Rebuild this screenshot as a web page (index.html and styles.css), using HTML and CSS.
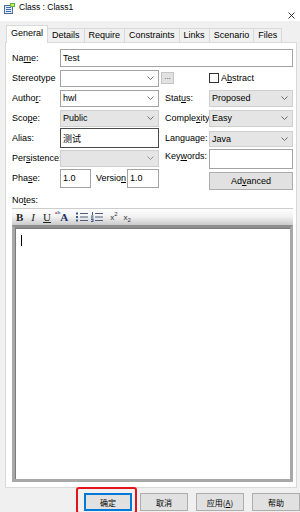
FILE: index.html
```html
<!DOCTYPE html>
<html>
<head>
<meta charset="utf-8">
<link rel="stylesheet" href="styles.css">
</head>
<body>
<div class="titlebar">
  <svg class="app-icon" width="11" height="11" viewBox="0 0 11 11">
    <rect x="0.5" y="2.5" width="8" height="8" fill="#e4eaf2" stroke="#4d6c9c"/>
    <rect x="2" y="4" width="5" height="1" fill="#3a6fc0"/>
    <rect x="2" y="6" width="5" height="1" fill="#3a6fc0"/>
    <rect x="2" y="8" width="5" height="1" fill="#3a6fc0"/>
    <rect x="6" y="0" width="5" height="4" fill="#5cb84a"/>
    <rect x="7" y="1" width="3" height="2" fill="#d6e85a"/>
  </svg>
  <span class="title">Class : Class1</span>
  <svg class="close" width="7" height="7" viewBox="0 0 7 7">
    <path d="M0.5 0.5 L6.5 6.5 M6.5 0.5 L0.5 6.5" stroke="#222" stroke-width="0.9" fill="none"/>
  </svg>
</div>

<div class="tabs">
  <div class="tab active">General</div>
  <div class="tab">Details</div>
  <div class="tab">Require</div>
  <div class="tab">Constraints</div>
  <div class="tab">Links</div>
  <div class="tab">Scenario</div>
  <div class="tab">Files</div>
</div>

<div class="panel">
  <div class="form">
    <div class="lbl r1">Na<u>m</u>e:</div>
    <div class="field r1 c-name">Test</div>

    <div class="lbl r2">Stereotype</div>
    <div class="field combo r2 c2"><span class="val"></span><svg class="chev" width="7" height="4" viewBox="0 0 7 4"><polyline points="0.5,0.5 3.5,3.5 6.5,0.5" fill="none" stroke="#606060" stroke-width="0.9"/></svg></div>
    <div class="r2 c34 dots-cell"><div class="dots">...</div></div>
    <div class="r2 c5 abstract"><span class="chk"></span><span>A<u>b</u>stract</span></div>

    <div class="lbl r3">Autho<u>r</u>:</div>
    <div class="field combo r3 c2"><span class="val">hwl</span><svg class="chev" width="7" height="4" viewBox="0 0 7 4"><polyline points="0.5,0.5 3.5,3.5 6.5,0.5" fill="none" stroke="#606060" stroke-width="0.9"/></svg></div>
    <div class="lbl r3 c4">Stat<u>u</u>s:</div>
    <div class="field combo ro r3 c5"><span class="val">Proposed</span><svg class="chev" width="7" height="4" viewBox="0 0 7 4"><polyline points="0.5,0.5 3.5,3.5 6.5,0.5" fill="none" stroke="#606060" stroke-width="0.9"/></svg></div>

    <div class="lbl r4">Sco<u>p</u>e:</div>
    <div class="field combo ro r4 c2"><span class="val">Public</span><svg class="chev" width="7" height="4" viewBox="0 0 7 4"><polyline points="0.5,0.5 3.5,3.5 6.5,0.5" fill="none" stroke="#606060" stroke-width="0.9"/></svg></div>
    <div class="lbl r4 c4">Comple<u>x</u>ity</div>
    <div class="field combo ro r4 c5"><span class="val">Easy</span><svg class="chev" width="7" height="4" viewBox="0 0 7 4"><polyline points="0.5,0.5 3.5,3.5 6.5,0.5" fill="none" stroke="#606060" stroke-width="0.9"/></svg></div>

    <div class="lbl r5">Alias:</div>
    <div class="field alias r5 c2">测试</div>
    <div class="lbl r5 c4">Language:</div>
    <div class="field combo ro r5 c5 lang"><span class="val">Java</span><svg class="chev" width="7" height="4" viewBox="0 0 7 4"><polyline points="0.5,0.5 3.5,3.5 6.5,0.5" fill="none" stroke="#606060" stroke-width="0.9"/></svg></div>

    <div class="lbl r6">Per<u>s</u>istence:</div>
    <div class="field combo ro dis r6 c2"><span class="val"></span><svg class="chev" width="7" height="4" viewBox="0 0 7 4"><polyline points="0.5,0.5 3.5,3.5 6.5,0.5" fill="none" stroke="#8a8a8a" stroke-width="0.9"/></svg></div>
    <div class="lbl r6 c4 kw-lbl">Key<u>w</u>ords:</div>
    <div class="field kw r6 c5"></div>

    <div class="lbl r7">Pha<u>s</u>e:</div>
    <div class="r7 c2 phase-cell">
      <div class="field phase">1.0</div>
      <div class="ver-lbl"><span>Versio<u>n</u></span></div>
      <div class="field version">1.0</div>
    </div>
    <div class="r7 c5 adv">Ad<u>v</u>anced</div>
  </div>

  <div class="notes-lbl">No<u>t</u>es:</div>
  <div class="toolbar">
    <span class="tb tb-b">B</span>
    <span class="tb tb-i">I</span>
    <span class="tb tb-u">U</span>
    <span class="tb tb-a"><span class="fa-s"><span class="fa-s1">a</span><span class="fa-s2">b</span></span><span class="fa-big">A</span></span>
    <svg class="tb tb-ul" width="12" height="10" viewBox="0 0 12 10">
      <rect x="0" y="0.5" width="2" height="2" fill="#3a5a8c"/>
      <rect x="0" y="4" width="2" height="2" fill="#3a5a8c"/>
      <rect x="0" y="7.5" width="2" height="2" fill="#3a5a8c"/>
      <rect x="4" y="1" width="8" height="1" fill="#50607a"/>
      <rect x="4" y="4.5" width="8" height="1" fill="#50607a"/>
      <rect x="4" y="8" width="8" height="1" fill="#50607a"/>
    </svg>
    <svg class="tb tb-ol" width="12" height="10" viewBox="0 0 12 10">
      <rect x="1" y="0" width="1" height="3" fill="#3a5a8c"/>
      <rect x="0" y="3.5" width="2.5" height="1" fill="#3a5a8c"/>
      <rect x="0.5" y="4.5" width="1" height="1" fill="#3a5a8c"/>
      <rect x="0" y="5.5" width="2.5" height="1" fill="#3a5a8c"/>
      <rect x="0" y="7" width="2.5" height="1" fill="#3a5a8c"/>
      <rect x="1.5" y="8" width="1" height="1" fill="#3a5a8c"/>
      <rect x="0" y="9" width="2.5" height="1" fill="#3a5a8c"/>
      <rect x="4" y="1" width="8" height="1" fill="#50607a"/>
      <rect x="4" y="4.5" width="8" height="1" fill="#50607a"/>
      <rect x="4" y="8" width="8" height="1" fill="#50607a"/>
    </svg>
    <span class="tb tb-sup">x<span class="sup">2</span></span>
    <span class="tb tb-sub">x<span class="sub">2</span></span>
  </div>
  <div class="editor"><span class="caret"></span></div>
</div>

<div class="buttons">
  <div class="btn default">确定</div>
  <div class="btn">取消</div>
  <div class="btn">应用(<u>A</u>)</div>
  <div class="btn">帮助</div>
</div>
<div class="mark"></div>
</body>
</html>
```

FILE: styles.css
```css
body {
  margin: 0;
  width: 300px;
  height: 512px;
  overflow: hidden;
  position: relative;
  background: #f0f0f0;
  font-family: "Liberation Sans", Arial, "Noto Sans CJK SC", sans-serif;
  font-size: 9px;
  color: #000;
}

.titlebar {
  height: 21px;
  background: #fff;
  display: flex;
  align-items: flex-start;
}
.app-icon { margin: 3px 0 0 4px; }
.title {
  margin: 2px 0 0 4px;
  font-size: 8.5px;
  line-height: 11px;
  color: #000;
}
.close { margin: 12px 5px 0 auto; }

.tabs {
  display: flex;
  align-items: flex-end;
  height: 18px;
  margin: 4px 0 0 6px;
  position: relative;
  z-index: 1;
}
.tab {
  height: 14px;
  box-sizing: border-box;
  padding: 0 4px;
  margin-left: -1px;
  margin-bottom: 1px;
  border: 1px solid #d9d9d9;
  border-bottom: none;
  background: #f0f0f0;
  line-height: 12px;
  white-space: nowrap;
}
.tab.active {
  height: 18px;
  margin-left: 0;
  margin-bottom: 0;
  background: #fff;
  line-height: 15px;
}

.panel {
  margin: -1px 0 0 5px;
  width: 292px;
  height: 446px;
  box-sizing: border-box;
  border: 1px solid #d9d9d9;
  background: #fff;
  padding: 5px 3px 5px 6px;
  display: flex;
  flex-direction: column;
}

.form {
  display: grid;
  grid-template-columns: 48px 99px 6px 44px 84px;
  grid-auto-rows: 20px;
  align-items: center;
}
.r1 { grid-row: 1; }
.r2 { grid-row: 2; }
.r3 { grid-row: 3; }
.r4 { grid-row: 4; }
.r5 { grid-row: 5; }
.r6 { grid-row: 6; }
.r7 { grid-row: 7; }
.lbl { grid-column: 1; white-space: nowrap; line-height: 12px; }
.lbl.c4 { grid-column: 4; overflow: hidden; }
.c2 { grid-column: 2; }
.c34 { grid-column: 3 / 5; }
.c5 { grid-column: 5; }
.c-name { grid-column: 2 / 6; }

.field {
  box-sizing: border-box;
  height: 18px;
  border: 1px solid #a3a3a3;
  background: #fff;
  padding-left: 2px;
  display: flex;
  align-items: center;
  white-space: nowrap;
}
.combo { height: 17px; }
.combo .val { flex: 1; }
.chev { margin-right: 4px; }
.combo.ro {
  background: #e5e5e5;
  border-color: #cfcfcf;
}
.alias {
  height: 20px;
  border-color: #4a4a4a;
  font-family: "Noto Sans CJK SC", sans-serif;
  font-size: 9px;
}
.lang { height: 16px; margin-top: 1px; }
.kw { height: 20px; margin-top: 1px; }
.kw-lbl { margin-top: -4px; }

.dots-cell { display: flex; }
.dots {
  margin-left: 2px;
  width: 13px;
  height: 12px;
  box-sizing: border-box;
  border: 1px solid #c4c4c4;
  background: #e1e1e1;
  font-size: 8px;
  line-height: 8px;
  text-align: center;
  color: #333;
}
.abstract { display: flex; align-items: center; gap: 2px; }
.chk {
  width: 10px;
  height: 10px;
  box-sizing: border-box;
  border: 1px solid #333;
  background: #fff;
}

.phase-cell { display: flex; align-items: center; }
.phase { width: 31px; height: 19px; }
.ver-lbl {
  width: 36px;
  overflow: hidden;
  display: flex;
  justify-content: flex-end;
  padding-right: 1px;
  box-sizing: border-box;
}
.ver-lbl span { white-space: nowrap; }
.version { width: 32px; height: 19px; }

.adv {
  align-self: start;
  margin-top: 4px;
  height: 18px;
  box-sizing: border-box;
  border: 1px solid #adadad;
  background: #e1e1e1;
  display: flex;
  align-items: center;
  justify-content: center;
}

.notes-lbl {
  margin-top: 6px;
  line-height: 12px;
}

.toolbar {
  margin-top: 2px;
  height: 17px;
  box-sizing: border-box;
  border-top: 1px solid #cdcdcd;
  background: linear-gradient(#fefefe, #f3f3f3 45%, #cbcbcb);
  display: flex;
  align-items: center;
  font-family: "Liberation Serif", "Times New Roman", serif;
  font-size: 11px;
  color: #222;
}
.tb { display: block; }
.tb-b { margin-left: 4px; font-weight: bold; }
.tb-i { margin-left: 8px; font-style: italic; }
.tb-u { margin-left: 8px; text-decoration: underline; }
.tb-a {
  margin-left: 4px;
  display: flex;
  align-items: flex-start;
}
.fa-s {
  display: flex;
  font-size: 5px;
  line-height: 6px;
  font-weight: bold;
  margin-top: -1px;
}
.fa-s1 { color: #d03030; }
.fa-s2 { color: #2f6fd0; }
.fa-big {
  font-weight: bold;
  color: #1b2f6a;
  line-height: 12px;
}
.tb-ul { margin-left: 8px; }
.tb-ol { margin-left: 3px; }
.tb-sup, .tb-sub {
  font-family: "Liberation Sans", Arial, sans-serif;
  font-size: 8px;
  color: #333;
  position: relative;
}
.tb-sup { margin-left: 7px; }
.tb-sub { margin-left: 6px; }
.sup { font-size: 6px; position: relative; top: -4px; }
.sub { font-size: 6px; position: relative; top: 2px; }

.editor {
  flex: 1;
  box-sizing: border-box;
  border: 3px solid #a8a8a8;
  border-top-color: #8e8e8e;
  box-shadow: inset 1px 1px 0 #7a7a7a;
  background: #fff;
  padding: 7px 0 0 6px;
}
.caret {
  display: block;
  width: 1px;
  height: 11px;
  background: #000;
}

.buttons {
  display: flex;
  gap: 8px;
  margin: 5px 0 0 84px;
}
.btn {
  flex: none;
  width: 48px;
  height: 18px;
  box-sizing: border-box;
  border: 1px solid #adadad;
  background: #e1e1e1;
  display: flex;
  align-items: center;
  justify-content: center;
  font-family: "Noto Sans CJK SC", sans-serif;
  font-size: 8px;
  white-space: nowrap;
}
.btn.default {
  border-color: #0078d7;
  box-shadow: inset 0 0 0 1px #0078d7;
}

.mark {
  position: absolute;
  left: 76px;
  top: 487px;
  width: 61px;
  height: 27px;
  box-sizing: border-box;
  border: 2px solid #e3141b;
  border-radius: 3px;
}
```
